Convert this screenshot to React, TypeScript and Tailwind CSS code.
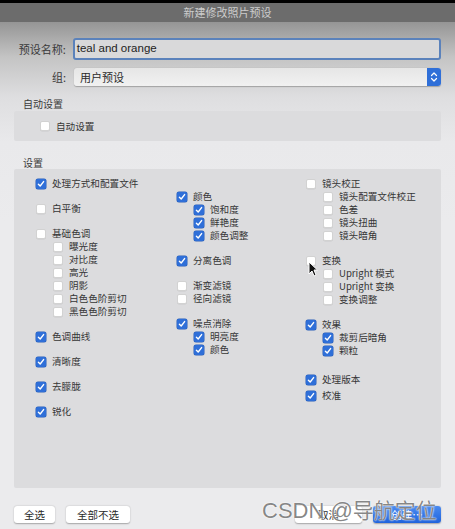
import React from "react";

type Item = { label: string; checked: boolean; subs?: { label: string; checked: boolean }[]; mt?: string };

const CJK = "font-['Noto_Sans_CJK_SC','Noto_Sans',sans-serif]";

function Box({ checked }: { checked: boolean }) {
  if (checked) {
    return (
      <span className="flex h-[10px] w-[10px] shrink-0 items-center justify-center rounded-[2px] bg-[#2f6fd8] shadow-[0_0_0_0.5px_#2a5fb8]">
        <svg width="8" height="8" viewBox="0 0 8 8">
          <path d="M1.4 4.2 L3.2 6 L6.6 1.6" fill="none" stroke="#fff" strokeWidth="1.4" strokeLinecap="round" strokeLinejoin="round" />
        </svg>
      </span>
    );
  }
  return <span className="h-[10px] w-[10px] shrink-0 rounded-[2px] border border-[#d2d2d2] bg-white shadow-[0_0.5px_0.5px_rgba(0,0,0,0.08)]" />;
}

function Row({ label, checked }: { label: string; checked: boolean }) {
  return (
    <div className="flex h-[13px] items-center gap-[6px] whitespace-nowrap text-[9.6px] leading-none text-[#363636]">
      <Box checked={checked} />
      <span>{label}</span>
    </div>
  );
}

function Group({ item }: { item: Item }) {
  return (
    <div className={item.mt ?? "mt-[12px]"}>
      <Row label={item.label} checked={item.checked} />
      {item.subs && (
        <div className="ml-[17px]">
          {item.subs.map((s) => (
            <Row key={s.label} label={s.label} checked={s.checked} />
          ))}
        </div>
      )}
    </div>
  );
}

const col1: Item[] = [
  { label: "处理方式和配置文件", checked: true, mt: "mt-0" },
  { label: "白平衡", checked: false },
  {
    label: "基础色调",
    checked: false,
    subs: [
      { label: "曝光度", checked: false },
      { label: "对比度", checked: false },
      { label: "高光", checked: false },
      { label: "阴影", checked: false },
      { label: "白色色阶剪切", checked: false },
      { label: "黑色色阶剪切", checked: false },
    ],
  },
  { label: "色调曲线", checked: true },
  { label: "清晰度", checked: true },
  { label: "去朦胧", checked: true },
  { label: "锐化", checked: true },
];

const col2: Item[] = [
  {
    label: "颜色",
    checked: true,
    mt: "mt-[13px]",
    subs: [
      { label: "饱和度", checked: true },
      { label: "鲜艳度", checked: true },
      { label: "颜色调整", checked: true },
    ],
  },
  { label: "分离色调", checked: true },
  { label: "渐变滤镜", checked: false },
  { label: "径向滤镜", checked: false, mt: "mt-0" },
  {
    label: "噪点消除",
    checked: true,
    subs: [
      { label: "明亮度", checked: true },
      { label: "颜色", checked: true },
    ],
  },
];

const col3: Item[] = [
  {
    label: "镜头校正",
    checked: false,
    mt: "mt-0",
    subs: [
      { label: "镜头配置文件校正", checked: false },
      { label: "色差", checked: false },
      { label: "镜头扭曲", checked: false },
      { label: "镜头暗角", checked: false },
    ],
  },
  {
    label: "变换",
    checked: false,
    subs: [
      { label: "Upright 模式", checked: false },
      { label: "Upright 变换", checked: false },
      { label: "变换调整", checked: false },
    ],
  },
  {
    label: "效果",
    checked: true,
    subs: [
      { label: "裁剪后暗角", checked: true },
      { label: "颗粒", checked: true },
    ],
  },
  { label: "处理版本", checked: true, mt: "mt-[16px]" },
  { label: "校准", checked: true, mt: "mt-[3px]" },
];

export default function App() {
  return (
    <div className={`relative flex h-[529px] w-[455px] flex-col overflow-hidden ${CJK}`}>
      <div className="h-[3px] bg-black" />
      <div className="flex h-[19px] items-center justify-center bg-[#6c6c6c] text-[11px] text-[#cdcdcd]">
        新建修改照片预设
      </div>

      <div className="flex flex-1 flex-col bg-[linear-gradient(to_bottom,#959595_0px,#c4c4c4_35px,#dedee0_75px,#e9e9eb_120px,#ebebed_200px)] px-[14px]">
        {/* name */}
        <div className="mt-[16px] flex items-center">
          <span className="w-[52px] text-right text-[11px] text-[#3a3a3a]">预设名称:</span>
          <div className="ml-[7px] flex h-[22px] w-[370px] items-center rounded-[3px] border-[2.5px] border-[#5b82bb] bg-[#d9d9da] pl-[2px] text-[11.5px] text-[#1e1e1e] font-['Liberation_Sans',sans-serif]">
            teal and orange
          </div>
        </div>
        {/* group */}
        <div className="mt-[8px] flex items-center">
          <span className="w-[52px] text-right text-[11px] text-[#3a3a3a]">组:</span>
          <div className="ml-[8px] flex h-[18px] w-[367px] items-center justify-between rounded-[3px] bg-[linear-gradient(to_bottom,#e6e6e6,#f1f1f1)] pl-[6px] text-[11px] text-[#2a2a2a] shadow-[0_0.5px_1px_rgba(0,0,0,0.25)]">
            <span>用户预设</span>
            <span className="flex h-[18px] w-[14px] items-center justify-center rounded-r-[3px] bg-[#2f6fd8]">
              <svg width="8" height="12" viewBox="0 0 8 12">
                <path d="M1.5 4.5 L4 2 L6.5 4.5 M1.5 7.5 L4 10 L6.5 7.5" fill="none" stroke="#fff" strokeWidth="1.2" strokeLinecap="round" strokeLinejoin="round" />
              </svg>
            </span>
          </div>
        </div>

        {/* auto settings */}
        <div className="mt-[10px] h-[15px] pl-[9px] text-[10px] leading-[15px] text-[#3a3a3a]">自动设置</div>
        <div className="flex h-[30px] items-center rounded-[2px] bg-[#dcdcde] pl-[26px]">
          <div className="flex items-center gap-[6px] text-[9.6px] text-[#363636]">
            <Box checked={false} />
            <span>自动设置</span>
          </div>
        </div>

        {/* settings */}
        <div className="mt-[15px] h-[13px] pl-[9px] text-[10px] leading-[13px] text-[#3a3a3a]">设置</div>
        <div className="h-[319px] rounded-[2px] bg-[#dcdcde] pt-[8px] pl-[22px]">
          <div className="flex">
            <div className="w-[141px]">
              {col1.map((it) => (
                <Group key={it.label} item={it} />
              ))}
            </div>
            <div className="w-[129px]">
              {col2.map((it) => (
                <Group key={it.label} item={it} />
              ))}
            </div>
            <div>
              {col3.map((it) => (
                <Group key={it.label} item={it} />
              ))}
            </div>
          </div>
        </div>

        {/* buttons */}
        <div className="mt-[18px] flex items-center text-[10.5px] text-[#2a2a2a]">
          <button className="flex h-[17px] w-[41px] items-center justify-center rounded-[3px] bg-white shadow-[0_0.5px_1.5px_rgba(0,0,0,0.3)]">全选</button>
          <button className="ml-[11px] flex h-[17px] w-[64px] items-center justify-center rounded-[3px] bg-white shadow-[0_0.5px_1.5px_rgba(0,0,0,0.3)]">全部不选</button>
          <button className="ml-auto flex h-[17px] w-[67px] items-center justify-center rounded-[3px] bg-white shadow-[0_0.5px_1.5px_rgba(0,0,0,0.3)]">取消</button>
          <button className="ml-[11px] flex h-[17px] w-[68px] items-center justify-center rounded-[3px] bg-[linear-gradient(to_bottom,#4a8af0,#1f63dc)] text-white shadow-[0_0.5px_1.5px_rgba(0,0,0,0.3)]">创建…</button>
        </div>
      </div>

      {/* mouse cursor */}
      <svg className="absolute left-[308px] top-[261px]" width="10" height="16" viewBox="0 0 10 16">
        <path d="M1 1 L1 13 L4 10 L6 15 L8 14 L6 9 L9.5 9 Z" fill="#111" stroke="#fff" strokeWidth="1" strokeLinejoin="round" />
      </svg>

      {/* watermark */}
      <div className="pointer-events-none absolute left-[262px] top-[499px] flex items-baseline whitespace-nowrap leading-none text-[rgba(95,95,95,0.75)] [text-shadow:0_0_2px_#fff,0_0_1px_#fff]">
        <span className="text-[22px] font-['Liberation_Sans',sans-serif]">CSDN @</span>
        <span className="text-[21px]">导航定位</span>
      </div>
    </div>
  );
}
